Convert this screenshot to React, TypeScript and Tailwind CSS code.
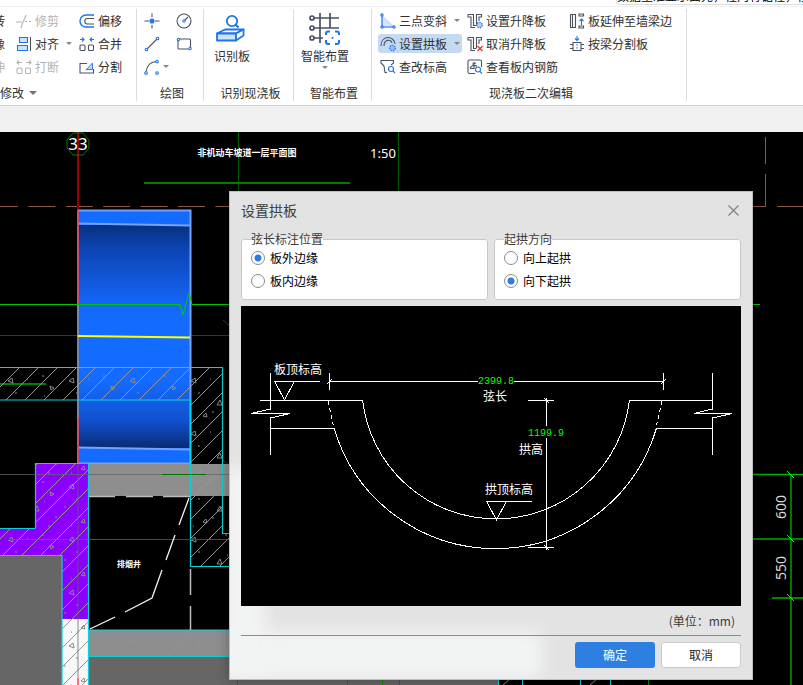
import type { ReactNode } from "react";

const INK = "#4b5262";
const BLUE = "#1f74e8";

function Icon({ children, off = false }: { children: ReactNode; off?: boolean }) {
  return (
    <svg width="16" height="16" viewBox="0 0 16 16" fill="none" stroke={off ? "#b4b4b4" : INK} strokeWidth="1.1" className="shrink-0" aria-hidden="true">
      {children}
    </svg>
  );
}

function Caret() {
  return <span aria-hidden="true" className="h-0 w-0 shrink-0 border-x-3 border-t-3 border-x-transparent border-t-[#858585]" />;
}

type ToolProps = { label: string; icon?: ReactNode; off?: boolean; active?: boolean; caret?: boolean };

function Tool({ label, icon, off = false, active = false, caret = false }: ToolProps) {
  return (
    <button
      type="button"
      disabled={off}
      className={`flex h-[19px] items-center gap-[3px] whitespace-nowrap rounded-[3px] px-[2px] ${active ? "bg-[#c3daf2]" : ""} ${off ? "text-[#b4b4b4]" : "text-[#303030]"}`}
    >
      {icon}
      <span>{label}</span>
      {caret && <span className="flex pl-1"><Caret /></span>}
    </button>
  );
}

function Group({ title, className, children }: { title: ReactNode; className: string; children: ReactNode }) {
  return (
    <section className={`flex h-full shrink-0 flex-col border-r border-[#dcdcdc] ${className}`}>
      <div className="min-h-0 flex-1">{children}</div>
      <div className="flex h-4 shrink-0 items-center justify-center leading-4">{title}</div>
    </section>
  );
}

function Column({ children, className = "" }: { children: ReactNode; className?: string }) {
  return <div className={`grid auto-rows-[23px] items-center justify-items-start ${className}`}>{children}</div>;
}

const StepShape = () => <path d="M1 1.5H6.500V12.500H9.500M1 1.500V4H4V14.500H8M9.500 12V1.500H14.500V4H12V8" />;

function Ribbon() {
  return (
    <header className="h-[106px] shrink-0 overflow-hidden border-b border-[#d2d2d2] bg-white">
      <div className="flex h-[7px] justify-end overflow-hidden border-b border-[#efefef]">
        <div className="h-[5px] w-[187px] overflow-hidden rounded-bl border-b border-l border-[#ddd]">
          <p className="-mt-3 whitespace-nowrap leading-4 text-black">数据至准显示面元，柱内有锯柱，柱</p>
        </div>
      </div>
      <div className="mt-[2px] flex h-[92px]">
        <Group
          className="w-[137px] overflow-hidden"
          title={<button type="button" className="flex w-full items-center gap-[5px]"><span>修改</span><span aria-hidden="true" className="h-0 w-0 border-x-4 border-t-4 border-x-transparent border-t-[#757575]" /></button>}
        >
          <div className="flex">
            <div className="grid w-[5px] auto-rows-[23px] grid-cols-[5px] items-center">
              <button type="button" aria-label="旋转" className="w-3 justify-self-end">转</button>
              <button type="button" aria-label="镜像" className="w-3 justify-self-end">像</button>
              <button type="button" aria-label="拉伸" disabled className="w-3 justify-self-end text-[#b4b4b4]">伸</button>
            </div>
            <Column className="w-[72px] pl-[9px]">
              <Tool off label="修剪" icon={<Icon off><path d="M0 9H6M9 8.500h2M13 8.500h2M10 2C9 6 7 7 5 15" /></Icon>} />
              <Tool caret label="对齐" icon={<Icon><path d="M14.500 1V15" /><path d="M3.500 1.500H11.500V6.500H3.500ZM1.500 9.500H11.500V14.500H1.500Z" fill="#cfe2fb" stroke={BLUE} /></Icon>} />
              <Tool off label="打断" icon={<Icon off><rect x="1" y="9" width="5" height="5.500" rx="1" /><rect x="9.500" y="9" width="5" height="5.500" rx="1" /><path d="M1 3.500H6M3 1.500 1 3.500 3 5.500M15 3.500H10M13 1.500l2 2-2 2" /></Icon>} />
            </Column>
            <Column>
              <Tool label="偏移" icon={<Icon><path d="M15 2H7a6 6 0 0 0 0 12H15" stroke={BLUE} strokeWidth="1.400" /><path d="M15 5.500H8a2.800 2.800 0 0 0 0 5.500H15" /></Icon>} />
              <Tool label="合并" icon={<Icon><rect x="1" y="9" width="5" height="5.500" rx="1" /><rect x="9.500" y="9" width="5" height="5.500" rx="1" /><path d="M1 3.500H5M3 1.500l2 2-2 2M15 3.500H11M13 1.500l-2 2 2 2" stroke={BLUE} /></Icon>} />
              <Tool label="分割" icon={<Icon><path d="M8 4.500H1V14H14.500V10" /><path d="M7 11 13.500 4V10.500H8Z" fill="#b8d5fa" stroke={BLUE} strokeWidth=".9" /></Icon>} />
            </Column>
          </div>
        </Group>

        <Group className="w-[67px]" title={<span className="pl-1">绘图</span>}>
          <div className="grid auto-rows-[23px] grid-cols-[32px_32px] items-center pl-[7px]">
            <button type="button" aria-label="点"><Icon><path d="M.5 8H5M11 8H15.500M8 .5V4M8 12V15.500" /><circle cx="8" cy="8" r="2" fill={BLUE} stroke={BLUE} /></Icon></button>
            <button type="button" aria-label="圆"><Icon><circle cx="8" cy="8" r="7" /><path d="M8 8 12 4" /><circle cx="8" cy="8" r="1.200" fill="#fff" stroke={BLUE} /></Icon></button>
            <button type="button" aria-label="直线"><Icon><path d="M3 13 13 3" /><circle cx="2.500" cy="13.500" r="1.300" fill="#fff" stroke={BLUE} /><circle cx="13.500" cy="2.500" r="1.300" fill="#fff" stroke={BLUE} /></Icon></button>
            <button type="button" aria-label="矩形"><Icon><rect x="2" y="3" width="12.500" height="10" rx="1" /><circle cx="2.500" cy="3.500" r="1.200" fill="#fff" stroke={BLUE} /><circle cx="14" cy="12.500" r="1.200" fill="#fff" stroke={BLUE} /></Icon></button>
            <button type="button" aria-label="弧线" className="flex items-center gap-[3px]"><Icon><path d="M2 13C3 6 6 3 12 2.500" /><circle cx="2" cy="14" r="1.300" fill="#fff" stroke={BLUE} /><circle cx="13" cy="2.500" r="1.300" fill="#fff" stroke={BLUE} /><circle cx="13" cy="14" r="1.300" stroke={BLUE} /></Icon><Caret /></button>
          </div>
        </Group>

        <Group className="w-[90px]" title={<span className="pl-1">识别现浇板</span>}>
          <button type="button" className="ml-[10px] flex flex-col items-center pt-[4px]">
            <svg width="30" height="30" viewBox="0 0 30 30" fill="none" stroke={BLUE} strokeWidth="1.800" strokeLinejoin="round" className="mr-[5px]" aria-hidden="true">
              <circle cx="17" cy="8" r="5.200" /><path d="m20.500 11.500 3 3" strokeWidth="2.200" />
              <path d="M2 20.500 10 16.500H28.500L21 20.500Z" fill="#fff" /><path d="M2 20.500H21V27.500H2Z" fill="#cfe2fb" /><path d="M21 20.500 28.500 16.500V22.500L21 27.500Z" fill="#fff" />
            </svg>
            <span className="mt-[5px] leading-4">识别板</span>
          </button>
        </Group>

        <Group className="w-[78px]" title={<span className="pl-[3px]">智能布置</span>}>
          <button type="button" className="ml-[7px] flex flex-col items-center pt-[4px]">
            <svg width="32" height="32" viewBox="0 0 32 32" fill="none" stroke={INK} strokeWidth="1.700" aria-hidden="true">
              <path d="M5 5H30M5 15H30M5 25H14M11 0V30M21 0V15" />
              <circle cx="3" cy="5" r="2" fill="#fff" /><circle cx="3" cy="15" r="2" fill="#fff" /><circle cx="3" cy="25" r="2" fill="#fff" />
              <path d="M21 18.500H19a2 2 0 0 0-2 2V22M26 18.500h2a2 2 0 0 1 2 2V22M17 27V29a2 2 0 0 0 2 2H21M30 27V29a2 2 0 0 1-2 2H26M22.700 25H24.300" stroke={BLUE} strokeWidth="2" />
            </svg>
            <span className="mt-[3px] leading-4">智能布置</span>
            <span className="mt-[6px]"><Caret /></span>
          </button>
        </Group>

        <Group className="w-[315px]" title={<span className="pl-1">现浇板二次编辑</span>}>
          <div className="flex pl-[6px]">
            <Column className="w-[87px]">
              <Tool caret label="三点变斜" icon={<Icon><path d="M2 3 14 14H2Z" fill="#d5e5fb" stroke="#c4d8f4" /><path d="M2 3V14H13" stroke={BLUE} /><circle cx="2" cy="2" r="1.100" fill="#fff" stroke={BLUE} /><circle cx="2" cy="14" r="1.100" fill="#fff" stroke={BLUE} /><circle cx="14" cy="14" r="1.100" fill="#fff" stroke={BLUE} /></Icon>} />
              <Tool active caret label="设置拱板" icon={<Icon><path d="M1 10C1-1 14-1 15 8M4 10C4 3 11 3 12 7" /><circle cx="12.500" cy="12" r="2.800" fill="#8fbdf7" stroke={BLUE} strokeDasharray="1.500 1" /></Icon>} />
              <Tool label="查改标高" icon={<Icon><path d="M7 13.500H5L4 7 1 4V1.500H13.500V4L11 6" /><circle cx="11" cy="10" r="2.500" stroke={BLUE} /><path d="m13 12 2 2" stroke={BLUE} /></Icon>} />
            </Column>
            <Column className="w-[102px]">
              <Tool label="设置升降板" icon={<Icon><StepShape /><circle cx="12.500" cy="12" r="2.800" fill="#a9cdfa" stroke={BLUE} strokeDasharray="1.500 1" /></Icon>} />
              <Tool label="取消升降板" icon={<Icon><StepShape /><path d="m10.500 10 5 5m0-5-5 5" stroke="#e33" strokeWidth="1.400" /></Icon>} />
              <Tool label="查看板内钢筋" icon={<Icon><path d="M8 14.500H2.500a1.500 1.500 0 0 1-1.500-1.500V2.500A1.500 1.500 0 0 1 2.500 1H13a1.500 1.500 0 0 1 1.500 1.500V8" /><path d="M7 3V10M5 5l4-1M3 9.500C4 6 8 6 10 7M3 9.500H7" /><circle cx="11" cy="10.500" r="2.500" fill="#fff" stroke={BLUE} /><path d="m13 12.500 2 2" stroke={BLUE} /></Icon>} />
            </Column>
            <Column>
              <Tool label="板延伸至墙梁边" icon={<Icon><path d="M1.500 1.500H3.500V14.500H1.500ZM3.500 1.500H6.500V14.500H3.500ZM10 1H14.500V3H10ZM10 13H14.500V15H10Z" /><path d="M12.500 12V6M10.500 8l2-2 2 2" stroke={BLUE} /></Icon>} />
              <Tool label="按梁分割板" icon={<Icon><path d="M1 8.500H4M1 12.500H4M12 8.500H15M12 12.500H15M4 6.500H12V14.500H4Z" /><path d="M8 0V4M6 2.500l2 2 2-2M8 8v1.500M8 11v1.500" stroke={BLUE} /></Icon>} />
            </Column>
          </div>
        </Group>
      </div>
    </header>
  );
}

const CYAN = "#08d3d8";

function Drawing() {
  return (
    <svg className="absolute inset-0 h-full w-full font-['Noto_Sans','Noto_Sans_CJK_SC',sans-serif]" aria-label="非机动车坡道一层平面图">
      <defs>
        <pattern id="hatch" width="19" height="19" patternUnits="userSpaceOnUse"><path d="M0 7 7 0M7 19 19 7" stroke="#969696" fill="none" /></pattern>
        <pattern id="fleck" width="61" height="53" patternUnits="userSpaceOnUse">
          <path d="m8 10 4-3 1 5zM34 34l3-5 2 5zM50 15l4 2-3 2zM20 45l3-3 1 4z" fill="none" stroke="#8a8a8a" />
          <path d="M3 30h2M15 22h2M27 8h1M29 41h2M42 5h2M44 25h1M55 40h2M48 49h2M10 49h1" stroke="#8a8a8a" />
        </pattern>
        <linearGradient id="dome" x1="0" y1="0" x2="0" y2="1">
          <stop offset="0" stopColor="#08307f" /><stop offset=".1" stopColor="#0c43b0" /><stop offset=".3" stopColor="#125fea" /><stop offset=".4" stopColor="#146bff" />
          <stop offset=".7" stopColor="#146bff" /><stop offset=".88" stopColor="#1050cc" /><stop offset="1" stopColor="#082b75" />
        </linearGradient>
      </defs>
      <g transform="translate(0 -132)" fill="none">
        <path d="M238.500 132V192M398.500 132V192" stroke="#005c00" />
        <path d="M144 183H350" stroke="#008000" strokeWidth="2" />
        <path d="M-9 206.500H230M740 206.500H766M777 206.500H803" stroke="#8b5548" strokeDasharray="27 10.400" />
        <path d="M765.500 137V164M765.500 174V206" stroke="#8b5548" />
        <path d="M78 132V210" stroke="#9b0000" strokeWidth="2" />
        <path d="m73 133 10 0 6 7v8l-6 7H73l-6-7v-8z" stroke="#008000" />
        <path d="M0 335.500H78" stroke="#c00000" />
        <path d="M190 335.500H229M223 320l8 7M223 460l7 6" stroke="#005c00" />

        <path d="M0 384H46" stroke="#008000" strokeWidth="2" />
        <path d="M78 210H191V464H78Z" fill="#146bff" />
        <path d="M79 225H190V448H79Z" fill="url(#dome)" />
        <path d="M78 210.500H190.500V464M78 223.500 190 225.500M78 447.500 190 449.500M78 463.500H190" stroke="#75a2ff" strokeWidth="2" />
        <path d="M78 210V304M78 418V463" stroke="#c94f78" strokeWidth="2" />
        <path d="M78 304V418" stroke="#7088b5" strokeWidth="2" />
        <path d="M78 336 190 337.500" stroke="#ffff00" strokeWidth="2" />
        <path d="M0 304.500H180L183 315 189 293 192 304.500H230M740 304.500H760" stroke="#00c800" />

        <path d="M89 464H230V496H89Z" fill="#8e8e8e" />
        <path d="M0 556H62V685H0ZM89 657H498V685H89Z" fill="#666" />
        <path d="M89 630H240V656H89Z" fill="#8e8e8e" />
        <path d="M35 464H89V619H62V555H0V528H35Z" fill="#8b00ff" />
        <path d="M62 619H89V685H62Z" fill="#f8f8f8" />
        <g stroke="none">
          <path d="M0 368H222V533H230V566H191V400H0ZM35 464H89V685H62V555H0V528H35Z" fill="url(#hatch)" />
          <path d="M0 368H222V533H230V566H191V400H0ZM35 464H89V685H62V555H0V528H35ZM89 630H240V656H89Z" fill="url(#fleck)" />
          <path d="M89 630H240V656H89Z" fill="url(#hatch)" opacity=".4" />
        </g>
        <path d="M0 367.500H222.500V533.500H230M0 400H191M190.500 400V566.500H230M35.500 528V463.500H88.500V685M0 528.500H35.500M0 555.500H62V685M89 630H240M89 656.500H240" stroke={CYAN} strokeWidth="1.200" />
        <path d="M0 474.500H230M0 539.500H230M78 464V685" stroke="#646464" strokeOpacity=".75" />
        <path d="M162 474.500H206M162 539.500H206M0 539.500H10" stroke="#007600" />
        <path d="M78 678V685" stroke="#ff7070" strokeWidth="2" />
        <path d="M89 496.500H115M126 496.500H153M163 496.500H190M190.500 569V595M190.500 606V630" stroke="#bdbdbd" strokeWidth="1.500" />
        <path d="m189 498-10 27M175 535l-9 25M162 570l-10 28-27 14M115 617 90 629" stroke="#f5f5f5" strokeWidth="1.300" />
        <path d="M498.500 680V685M522.500 680V685M580.500 680V685M610.500 680V685" stroke={CYAN} />
        <path d="m503 685 7-6M590 685l7-6" stroke="#8a8a8a" />
        <path d="M237.500 680V685M347.500 680V685M382.500 680V685M399.500 680V685M648.500 680V685" stroke="#008c00" />

        <path d="M750 474.500H803M791 474V685M772 598H803" stroke="#00b400" strokeWidth="1.300" />
        <path d="M750 539H803" stroke="#008000" strokeWidth="2" />
        <path d="m787 471 7 7M787 535l7 7M787 594l7 7" stroke="#00ff00" />
        <g fill="#fff" stroke="none" textAnchor="middle">
          <text x="78" y="150" fontSize="17">33</text>
          <text x="247" y="156" fontSize="9" fontWeight="700">非机动车坡道一层平面图</text>
          <text x="383" y="158" fontSize="13">1:50</text>
          <text x="129" y="567" fontSize="8" fontWeight="700">排烟井</text>
          <text transform="translate(786 507) rotate(-90)" fontSize="14" fill="#d8d8d8">600</text>
          <text transform="translate(786 568) rotate(-90)" fontSize="14" fill="#d8d8d8">550</text>
        </g>
      </g>
    </svg>
  );
}

function ArchDiagram() {
  return (
    <svg viewBox="241 306 500 300" className="mt-[6px] block w-full bg-black" aria-label="拱板示意图">
      <g fill="none" stroke="#fff" shapeRendering="crispEdges">
        <path d="M270.500 373V409L251 413.500H290L270.500 418V455M260 400.500H362.500M270 428.500H334M274 381.500H320M275 382 284.500 400 294 382" />
        <path d="M329.500 373V390M327 384l5-5M329 381.500H478M514 381.500H664M663.500 373V390M661 384l5-5" />
        <path d="M328 401 334 428M662 401 656 428" strokeDasharray="4 3" />
        <path d="M362.500 400A134.400 134.400 0 0 0 629.500 400M334 428A168.100 168.100 0 0 0 656.500 428" />
        <path d="M629.500 400.500H713M656 428.500H712M712.500 373V409L694 413.500H732L712.500 418V455" />
        <path d="M528 400.500H554M528 547.500H554M546.500 398V426M546.500 438V550M544 398l5 5M544 545l5 5" />
        <path d="M486 501.500H532M487 502 496.500 520 506 502" />
      </g>
      <g fill="#fff" fontSize="12">
        <text x="274" y="374">板顶标高</text>
        <text x="483" y="401">弦长</text>
        <text x="519" y="454">拱高</text>
        <text x="485" y="494">拱顶标高</text>
      </g>
      <g fill="#00ff00" fontSize="10" className="font-['Liberation_Mono',monospace]">
        <text x="478" y="384">2399.8</text>
        <text x="528" y="436">1199.9</text>
      </g>
    </svg>
  );
}

function Choices({ legend, name, options, chosen }: { legend: string; name: string; options: string[]; chosen: number }) {
  return (
    <fieldset className="min-w-0 flex-1 rounded-[3px] border border-[#c8c8c8] bg-white pb-[7px] pl-[9px]">
      <legend className="leading-[14px] text-[#3c3c3c]">{legend}</legend>
      {options.map((option, i) => (
        <label key={option} className="flex h-[23px] items-center gap-[5px] text-black">
          <input
            type="radio"
            name={name}
            defaultChecked={i === chosen}
            className="h-[14px] w-[14px] appearance-none rounded-full border border-[#8c8c8c] bg-white checked:bg-[radial-gradient(circle,#2b7de0_3px,white_4px)]"
          />
          {option}
        </label>
      ))}
    </fieldset>
  );
}

function ArchDialog() {
  return (
    <form
      role="dialog"
      aria-labelledby="dialog-title"
      onSubmit={(e) => e.preventDefault()}
      className="absolute left-[229px] top-[59px] w-[524px] overflow-hidden border border-[#bebebe] bg-[#e3e3e3] px-[11px] pb-[11px] shadow-[0_0_12px_rgba(0,0,0,0.3)]"
    >
      <div aria-hidden="true" className="absolute -left-2 bottom-0 h-12 w-[320px] bg-[#f2f3f3] blur-[8px]" />
      <div aria-hidden="true" className="absolute -left-2 bottom-0 h-[210px] w-[44px] bg-[#f2f3f3] blur-[8px]" />
      <div className="relative">
        <div className="mb-1 flex h-9 items-center justify-between">
          <h1 id="dialog-title" className="text-sm text-[#3c3c3c]">设置拱板</h1>
          <button type="button" aria-label="关闭" className="pr-[2px]">
            <svg width="11" height="11" viewBox="0 0 11 11" stroke="#808080" strokeWidth="1.200" aria-hidden="true"><path d="m.5.5 10 10m0-10-10 10" /></svg>
          </button>
        </div>
        <div className="flex gap-[6px]">
          <Choices legend="弦长标注位置" name="chord" options={["板外边缘", "板内边缘"]} chosen={0} />
          <Choices legend="起拱方向" name="direction" options={["向上起拱", "向下起拱"]} chosen={1} />
        </div>
        <ArchDiagram />
        <p className="flex h-[30px] items-center justify-end border-b border-[#918a8c] pr-[6px] text-[#3c3c3c]">(单位：mm)</p>
        <div className="mt-[6px] flex justify-end gap-[6px]">
          <button type="submit" className="h-[26px] w-20 rounded-[3px] bg-[#2d80e2] text-white">确定</button>
          <button type="button" className="h-[26px] w-20 rounded-[3px] border border-[#cbcbcb] bg-white text-[#222]">取消</button>
        </div>
      </div>
    </form>
  );
}

export default function App() {
  return (
    <div className="flex h-screen flex-col overflow-hidden bg-[#f0f0f0] font-['Noto_Sans_CJK_SC',sans-serif] text-xs text-[#303030]">
      <Ribbon />
      <main className="relative mt-[26px] min-h-0 flex-1 overflow-hidden bg-black">
        <Drawing />
        <ArchDialog />
      </main>
    </div>
  );
}
